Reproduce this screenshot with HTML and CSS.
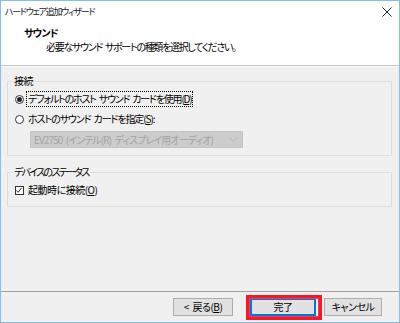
FILE: index.html
```html
<!DOCTYPE html>
<html lang="ja">
<head>
	<meta charset="UTF-8">
	<title>ハードウェア追加ウィザード</title>
	<link rel="stylesheet" href="styles.css">
</head>
<body>
	<div class="window">
		<div class="titlebar">
			<span class="title">ハードウェア追加ウィザード</span>
			<svg class="close" width="10" height="10" viewBox="0 0 10 10">
				<path d="M0.5 0.5 L9.5 9.5 M9.5 0.5 L0.5 9.5" stroke="#222" stroke-width="1" fill="none"/>
			</svg>
		</div>
		<div class="header">
			<h2>サウンド</h2>
			<p>必要なサウンド サポートの種類を選択してください。</p>
		</div>

		<div class="body">
			<fieldset class="group">
				<legend>接続</legend>
				<div class="option">
					<span class="radio checked"></span>
					<span class="label focus">デフォルトのホスト サウンド カードを使用(<u>D</u>)</span>
				</div>
				<div class="option">
					<span class="radio"></span>
					<span class="label kana">ホストのサウンド カードを指定(<u>S</u>):</span>
				</div>
				<div class="select">
					<span>EV2750 (インテル(R) ディスプレイ用オーディオ)</span>
					<svg width="9" height="6" viewBox="0 0 9 6">
						<path d="M0.5 0.5 L4.5 4.5 L8.5 0.5" stroke="#b8b8b8" fill="none"/>
					</svg>
				</div>
			</fieldset>

			<fieldset class="group second">
				<legend class="kana-wide">デバイスのステータス</legend>
				<div class="option">
					<span class="check">
						<svg width="9" height="9" viewBox="0 0 9 9">
							<path d="M1.5 4.5 L3.5 6.5 L7.5 1.5" stroke="#222" stroke-width="1.1" fill="none"/>
						</svg>
					</span>
					<span class="label">起動時に接続(<u>O</u>)</span>
				</div>
			</fieldset>
		</div>

		<div class="footer">
			<button class="btn back">&lt; 戻る(<u>B</u>)</button>
			<button class="btn done">完了</button>
			<button class="btn cancel">キャンセル</button>
		</div>
	</div>
</body>
</html>
```

FILE: styles.css
```css
* {
	box-sizing: border-box;
}
body {
	margin: 0;
	font-family: "Noto Sans CJK JP", "Liberation Sans", sans-serif;
	font-size: 10px;
	font-feature-settings: "palt";
	letter-spacing: -0.5px;
	word-spacing: 2px;
	color: #000;
	background-color: white;
}
u {
	text-decoration: underline;
	text-underline-offset: 1px;
}
/* katakana runs are much narrower in the system UI font */
.kana {
	letter-spacing: -1.1px;
}
.kana-wide {
	letter-spacing: -1.7px;
}

.window {
	width: 400px;
	height: 323px;
	border: 1px solid #84bfea;
	background-color: #f0f0f0;
	display: flex;
	flex-direction: column;
}

/* title bar + wizard header are both white */
.titlebar {
	height: 21px;
	background-color: white;
	display: flex;
	align-items: center;
	justify-content: space-between;
	padding: 0 7px 0 4px;
}
.title {
	font-size: 9px;
	line-height: 12px;
	letter-spacing: -1.3px;
	color: #222;
}
.close {
	display: block;
}
.header {
	height: 44px;
	background-color: white;
	padding: 4px 0 0 23px;
	border-bottom: 1px solid #c4c4c4;
}
.header h2 {
	margin: 0;
	font-size: 10px;
	font-weight: bold;
	line-height: 13px;
	letter-spacing: -0.8px;
}
.header p {
	margin: 1px 0 0 22px;
	line-height: 13px;
	letter-spacing: -1.3px;
}

.body {
	flex: 1;
	padding: 8px 7px 0 6px;
	border-top: 1px solid #fafafa;
}
.group {
	margin: 0;
	padding: 0 6px 7px 5px;
	border: 1px solid #dcdcdc;
}
.group legend {
	padding: 0 2px 0 1px;
	line-height: 12px;
}
.group.second {
	margin-top: 10px;
	padding-bottom: 8px;
}
.option {
	display: flex;
	align-items: center;
	height: 16px;
	margin-top: 4px;
	padding-left: 2px;
}
.radio {
	width: 9px;
	height: 9px;
	border: 1px solid #333;
	border-radius: 50%;
	background-color: white;
	display: flex;
	align-items: center;
	justify-content: center;
	margin-right: 3px;
}
.radio.checked::after {
	content: "";
	width: 5px;
	height: 5px;
	border-radius: 50%;
	background-color: #222;
}
.check {
	width: 9px;
	height: 9px;
	border: 1px solid #333;
	background-color: white;
	display: flex;
	margin-right: 3px;
}
.check svg {
	margin: -1px 0 0 -1px;
}
.label {
	line-height: 14px;
	padding: 0 1px;
	white-space: nowrap;
}
.label.focus {
	outline: 1px dotted #000;
	letter-spacing: -1.2px;
}
.select {
	margin: 4px 0 0 17px;
	width: 213px;
	height: 17px;
	background-color: #cccccc;
	border: 1px solid #c4c4c4;
	color: #a3a3a3;
	display: flex;
	align-items: center;
	justify-content: space-between;
	padding: 0 4px 0 3px;
	white-space: nowrap;
	letter-spacing: -0.9px;
}

.footer {
	height: 31px;
	border-top: 1px solid #a0a0a0;
	display: flex;
	justify-content: flex-end;
	align-items: flex-start;
	padding: 6px 17px 0 0;
}
.btn {
	height: 18px;
	font: inherit;
	letter-spacing: -0.5px;
	word-spacing: 2px;
	color: #000;
	background-color: #e1e1e1;
	border: 1px solid #adadad;
	padding: 0;
	line-height: 14px;
}
.back {
	width: 60px;
}
.done {
	width: 66px;
	margin-left: 17px;
	border-color: #0078d7;
	box-shadow: inset 0 0 0 1px #0078d7;
	position: relative;
}
/* red highlight drawn over the default button */
.done::after {
	content: "";
	position: absolute;
	left: -5px;
	right: -7px;
	top: -4px;
	bottom: -5px;
	border: 3px solid #ee1c25;
	box-shadow: inset 0 0 0 1px #f36;
}
.cancel {
	width: 58px;
	margin-left: 8px;
}
```
